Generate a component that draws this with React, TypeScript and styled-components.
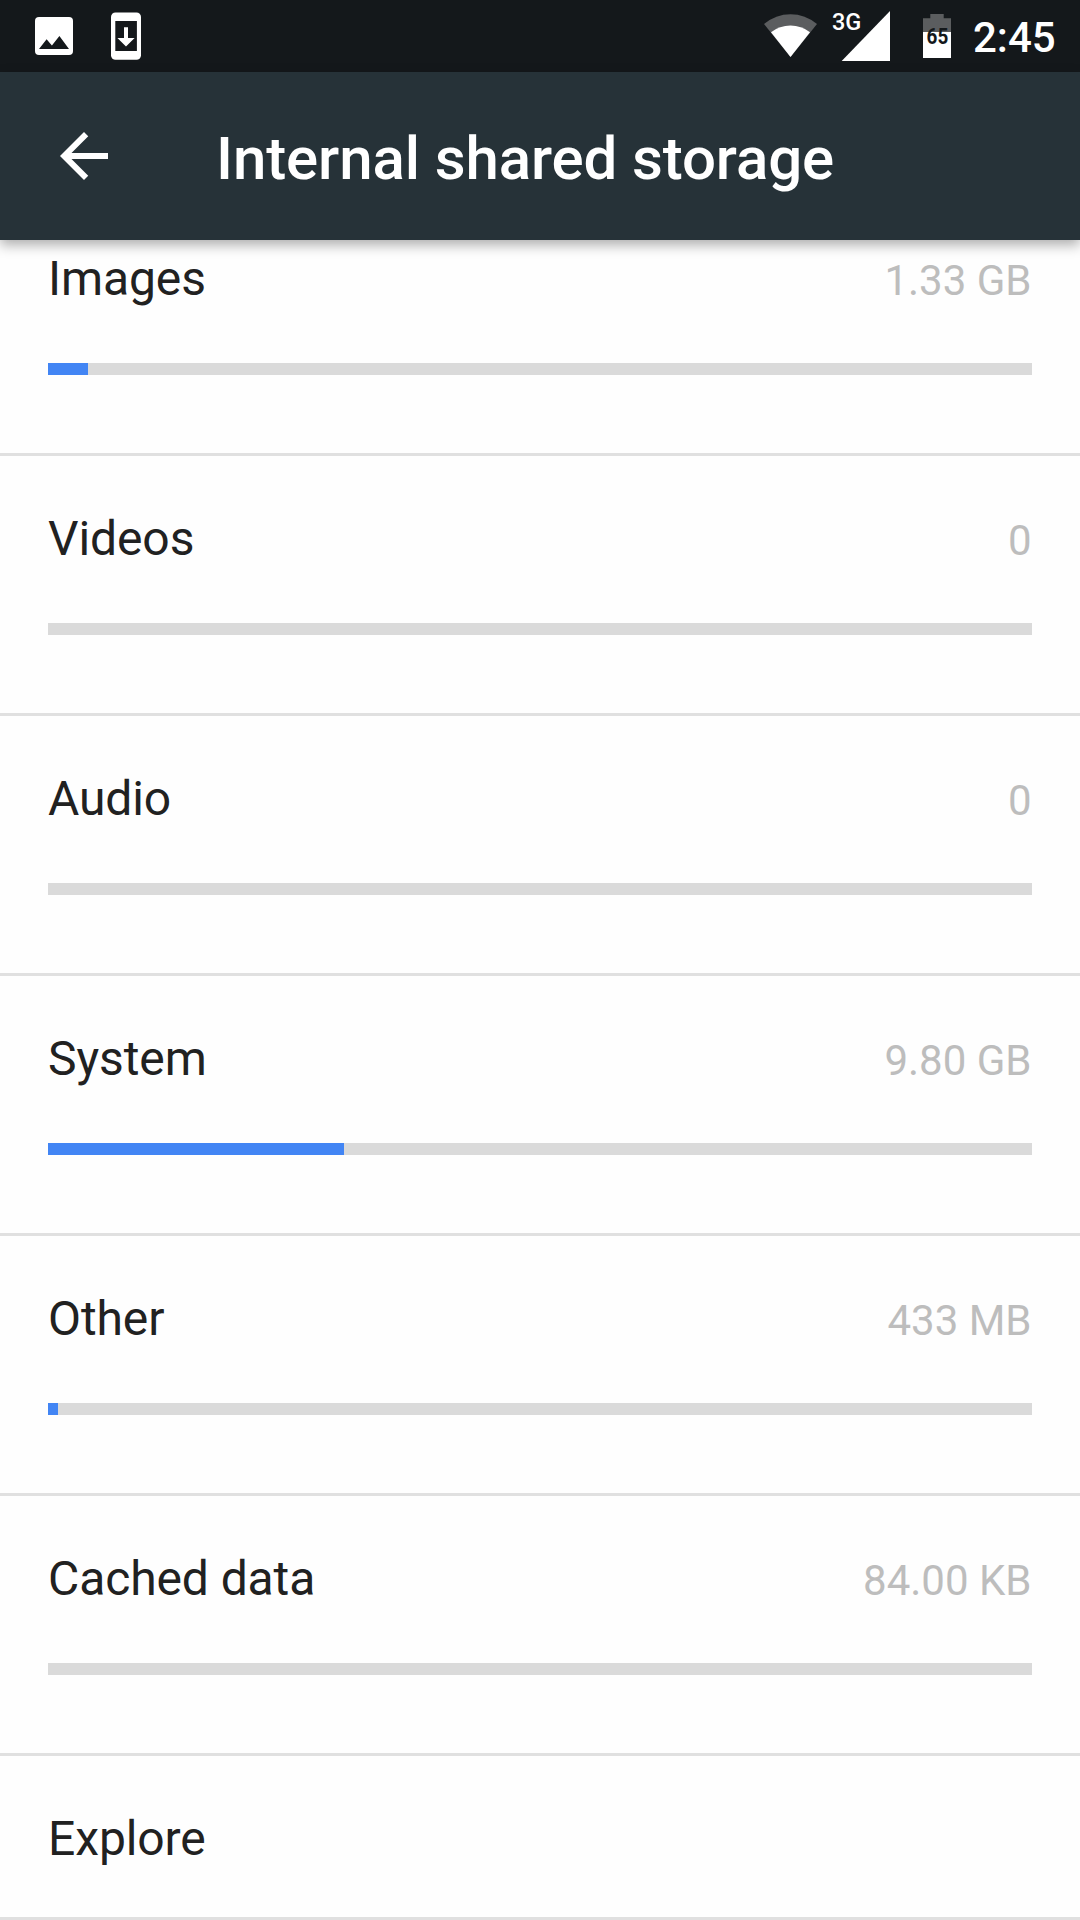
import React from "react";
import styled, { createGlobalStyle } from "styled-components";

const GlobalStyle = createGlobalStyle`
  * { box-sizing: border-box; }
  body {
    margin: 0;
    background: #fefefe;
    font-family: Roboto, "Noto Sans", sans-serif;
  }
`;

const Screen = styled.div`
  display: flex;
  flex-direction: column;
  width: 1080px;
  height: 1920px;
  overflow: hidden;
  background: #fefefe;
`;

const StatusBar = styled.header`
  display: flex;
  justify-content: space-between;
  flex: none;
  height: 72px;
  padding: 0 24px 0 35px;
  background: #14181b;
  color: #fff;
`;

const StatusGroup = styled.div`
  display: flex;
  align-items: flex-start;
`;

const Glyph = styled.svg<{ $gap?: number }>`
  display: block;
  flex: none;
  margin-right: ${(p) => p.$gap ?? 0}px;
`;

const Clock = styled.span`
  width: 83px;
  font-size: 42px;
  font-weight: 500;
  line-height: 50px;
  padding-top: 13px;
  white-space: nowrap;
`;

const Toolbar = styled.nav`
  display: flex;
  align-items: center;
  flex: none;
  height: 168px;
  padding-left: 60px;
  gap: 108px;
  background: #263238;
  color: #fff;
  z-index: 1;
  box-shadow: 0 5px 12px rgba(0, 0, 0, 0.32);
`;

const BackButton = styled.button`
  display: flex;
  width: 48px;
  height: 48px;
  padding: 0;
  border: 0;
  background: none;
  color: inherit;
`;

const Title = styled.h1`
  margin: 6px 0 0;
  font-size: 60px;
  font-weight: 500;
  line-height: 70px;
  letter-spacing: -0.11px;
  white-space: nowrap;
`;

const ScrolledList = styled.main`
  display: flex;
  flex-direction: column;
  margin-top: -44px;
`;

const Row = styled.section<{ $height: number }>`
  flex: none;
  height: ${(p) => p.$height}px;
  padding: 55px 48px 0;
  border-bottom: 3px solid #e0e0e0;
`;

const RowText = styled.div`
  display: flex;
  justify-content: space-between;
  align-items: baseline;
  height: 56px;
`;

const Label = styled.span`
  font-size: 48px;
  line-height: 56px;
  letter-spacing: -0.1px;
  color: #212121;
`;

const Amount = styled.span`
  font-size: 42px;
  line-height: 50px;
  padding-right: 0.5px;
  color: #bdbdbd;
`;

const Track = styled.div`
  height: 12px;
  margin-top: 56px;
  background: #dadada;
`;

const Fill = styled.div`
  height: 100%;
  background: #4285f4;
`;

const BAR_WIDTH = 984;

const categories = [
  { name: "Images", amount: "1.33 GB", used: 40 },
  { name: "Videos", amount: "0", used: 0 },
  { name: "Audio", amount: "0", used: 0 },
  { name: "System", amount: "9.80 GB", used: 296 },
  { name: "Other", amount: "433 MB", used: 10 },
  { name: "Cached data", amount: "84.00 KB", used: 0 },
];

const ImageIcon = () => (
  <Glyph width="38" height="72" viewBox="0 0 38 72" $gap={38}>
    <rect y="17" width="38" height="38" rx="4" fill="#fff" />
    <path d="M4 49L11.6 39.2L16.9 45.6L24.4 36L34 49Z" fill="#14181b" />
  </Glyph>
);

const UpdateIcon = () => (
  <Glyph width="30" height="72" viewBox="0 0 30 72">
    <rect y="12.5" width="30" height="47.2" rx="4.5" fill="#fff" />
    <rect x="4.3" y="21" width="21.6" height="30" fill="#14181b" />
    <path d="M13 27.3H17V38H23.6L15 46.6L6.4 38H13Z" fill="#fff" />
  </Glyph>
);

const WifiIcon = () => (
  <Glyph width="54" height="72" viewBox="0 0 54 72" $gap={14}>
    <path d="M26.5 57L0 24Q11.8 14.2 26.5 14.2T53 24Z" fill="#5b5d5f" />
    <path d="M26.5 57L7 32.2Q15.8 25.6 26.5 25.6T46 32.2Z" fill="#fff" />
  </Glyph>
);

const SignalIcon = () => (
  <Glyph width="58" height="72" viewBox="0 0 58 72" $gap={33}>
    <path d="M58 11V61H9.7Z" fill="#fff" />
    <text x="0" y="29.5" fontSize="23.5" fontWeight="500" fill="#fff">3G</text>
  </Glyph>
);

const BatteryIcon = () => (
  <Glyph width="28" height="72" viewBox="0 0 28 72" $gap={22}>
    <path d="M7.3 14H20.7V18.3H28V32H0V18.3H7.3Z" fill="#5b5d5f" />
    <path d="M0 32H28V58H0Z" fill="#fff" />
    <text transform="translate(3.6 44) scale(0.86 1)" fontSize="22" fontWeight="700" fill="#14181b">65</text>
  </Glyph>
);

export default function App() {
  return (
    <Screen>
      <GlobalStyle />
      <StatusBar>
        <StatusGroup>
          <ImageIcon />
          <UpdateIcon />
        </StatusGroup>
        <StatusGroup>
          <WifiIcon />
          <SignalIcon />
          <BatteryIcon />
          <Clock>2:45</Clock>
        </StatusGroup>
      </StatusBar>
      <Toolbar>
        <BackButton aria-label="Back">
          <Glyph width="48" height="48" viewBox="4 4 16 16">
            <path d="M20 11H7.83l5.59-5.59L12 4l-8 8 8 8 1.41-1.41L7.83 13H20v-2z" fill="currentColor" />
          </Glyph>
        </BackButton>
        <Title>Internal shared storage</Title>
      </Toolbar>
      <ScrolledList>
        {categories.map((c) => (
          <Row key={c.name} $height={260}>
            <RowText>
              <Label>{c.name}</Label>
              <Amount>{c.amount}</Amount>
            </RowText>
            <Track>
              <Fill style={{ width: `${(c.used / BAR_WIDTH) * 100}%` }} />
            </Track>
          </Row>
        ))}
        <Row $height={164}>
          <RowText>
            <Label>Explore</Label>
          </RowText>
        </Row>
      </ScrolledList>
    </Screen>
  );
}
